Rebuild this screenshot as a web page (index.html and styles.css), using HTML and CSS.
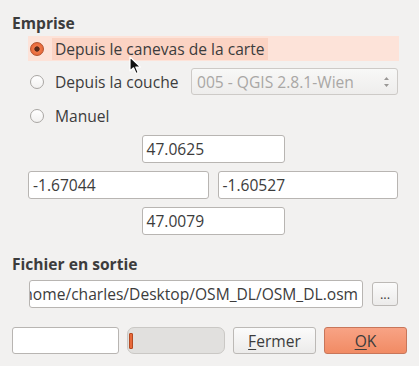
FILE: index.html
```html
<!DOCTYPE html>
<html>
<head>
<meta charset="utf-8">
<link rel="stylesheet" href="styles.css">
</head>
<body>
<div class="dlg">
  <div class="title t1">Emprise</div>
  <div class="group">
    <div class="opt opt-sel">
      <span class="radio on"></span><span class="lbl lbl-sel">Depuis le canevas de la carte</span>
    </div>
    <div class="opt opt2">
      <span class="radio"></span><span class="lbl">Depuis la couche</span>
      <div class="combo"><span class="combo-text">005 - QGIS 2.8.1-Wien</span>
        <svg class="spin" width="7" height="12" viewBox="0 0 7 12"><path d="M3.5 1 L6 4 L1 4 Z M1 8 L6 8 L3.5 11 Z" fill="#9a9896"/></svg>
      </div>
    </div>
    <div class="opt opt3">
      <span class="radio"></span><span class="lbl">Manuel</span>
    </div>
    <div class="coords">
      <div class="field narrow">47.0625</div>
      <div class="pair">
        <div class="field">-1.67044</div>
        <div class="field">-1.60527</div>
      </div>
      <div class="field narrow">47.0079</div>
    </div>
  </div>
  <div class="title t2">Fichier en sortie</div>
  <div class="out-row">
    <div class="field path"><span>/home/charles/Desktop/OSM_DL/OSM_DL.osm</span></div>
    <div class="btn dots">...</div>
  </div>
  <div class="bottom">
    <div class="field empty"></div>
    <div class="progress"><span class="chunk"></span></div>
    <div class="btn push"><u>F</u>ermer</div>
    <div class="btn push ok"><u>O</u>K</div>
  </div>
  <svg class="cursor" width="13" height="20" viewBox="0 0 13 20"><path d="M1 1 L1 15 L4.5 11.8 L7 17.5 L9.2 16.5 L6.8 11 L11.5 11 Z" fill="#111" stroke="#fff" stroke-width="1.2" stroke-linejoin="round"/></svg>
</div>
</body>
</html>
```
FILE: styles.css
```css
html, body {
  margin: 0;
  padding: 0;
  background: #f2f1f0;
}
.dlg {
  position: relative;
  width: 419px;
  height: 366px;
  box-sizing: border-box;
  padding: 0 12px;
  font-family: "Open Sans", "DejaVu Sans", sans-serif;
  font-size: 15.6px;
  color: #3c3c3c;
}
.title {
  font-weight: bold;
  height: 20px;
  line-height: 20px;
}
.t1 { padding-top: 13px; }
.group {
  margin-left: 16px;
  margin-right: 9px;
}
.opt {
  display: flex;
  align-items: center;
  height: 27px;
  margin-top: 7px;
}
.opt-sel {
  height: 25px;
  margin-top: 3px;
  background: #fde3d9;
  margin-right: -1px;
}
.radio {
  width: 12px;
  height: 12px;
  border-radius: 50%;
  border: 1px solid #a9a6a3;
  background: linear-gradient(#ffffff, #f2f1f0);
  margin-left: 2px;
  margin-right: 8px;
  flex: none;
}
.radio.on {
  border-color: #b3532f;
  background: radial-gradient(circle, #5a2a1a 0, #5a2a1a 2.3px, #f07a4a 3px, #e8683a 6px);
}
.lbl {
  height: 22px;
  line-height: 22px;
  padding: 0 3px;
  white-space: nowrap;
}
.lbl-sel { background: #fbd3c3; }
.combo {
  margin-left: auto;
  width: 207px;
  height: 27px;
  box-sizing: border-box;
  border: 1px solid #cdcac7;
  border-radius: 3px;
  background: linear-gradient(#f8f8f7, #eeedec);
  display: flex;
  align-items: center;
  padding: 0 7px 0 5px;
  color: #a9a7a5;
  white-space: nowrap;
  overflow: hidden;
}
.combo-text { flex: 1; }
.coords {
  display: flex;
  flex-direction: column;
  align-items: center;
  gap: 8px;
  margin-top: 6px;
}
.field {
  height: 28px;
  box-sizing: border-box;
  border: 1px solid #b8b5b2;
  border-radius: 3px;
  background: #fff;
  display: flex;
  align-items: center;
  padding: 0 4px;
  overflow: hidden;
  white-space: nowrap;
}
.narrow { width: 143px; }
.pair {
  display: flex;
  gap: 9px;
  align-self: stretch;
}
.pair .field { flex: 1; }
.t2 {
  margin-top: 19px;
}
.out-row {
  display: flex;
  align-items: center;
  margin-left: 17px;
  margin-right: 9px;
  margin-top: 6px;
  gap: 9px;
}
.path {
  flex: 1;
  justify-content: flex-end;
  padding-right: 4px;
}
.path span { flex: none; }
.btn {
  box-sizing: border-box;
  border: 1px solid #bcb9b6;
  border-radius: 3px;
  background: linear-gradient(#fbfbfb, #ecebea);
  display: flex;
  align-items: center;
  justify-content: center;
}
.dots {
  width: 26px;
  height: 24px;
  font-size: 13px;
}
.bottom {
  display: flex;
  gap: 8px;
  margin-top: 19px;
  height: 27px;
}
.bottom > * { height: 27px; }
.empty { width: 107px; }
.progress {
  width: 98px;
  box-sizing: border-box;
  border: 1px solid #cac8c5;
  border-radius: 7px;
  background: #e1e0de;
  display: flex;
  align-items: center;
  padding-left: 1px;
}
.chunk {
  width: 2px;
  height: 14px;
  background: #e8693a;
  border: 1px solid #b54a22;
  border-radius: 1px;
}
.push { width: 83px; }
.ok {
  background: linear-gradient(#f8a385, #f18b64);
  border-color: #c8765a;
}
u { text-decoration: underline; text-underline-offset: 2px; }
.cursor {
  position: absolute;
  left: 129px;
  top: 56px;
}
```
